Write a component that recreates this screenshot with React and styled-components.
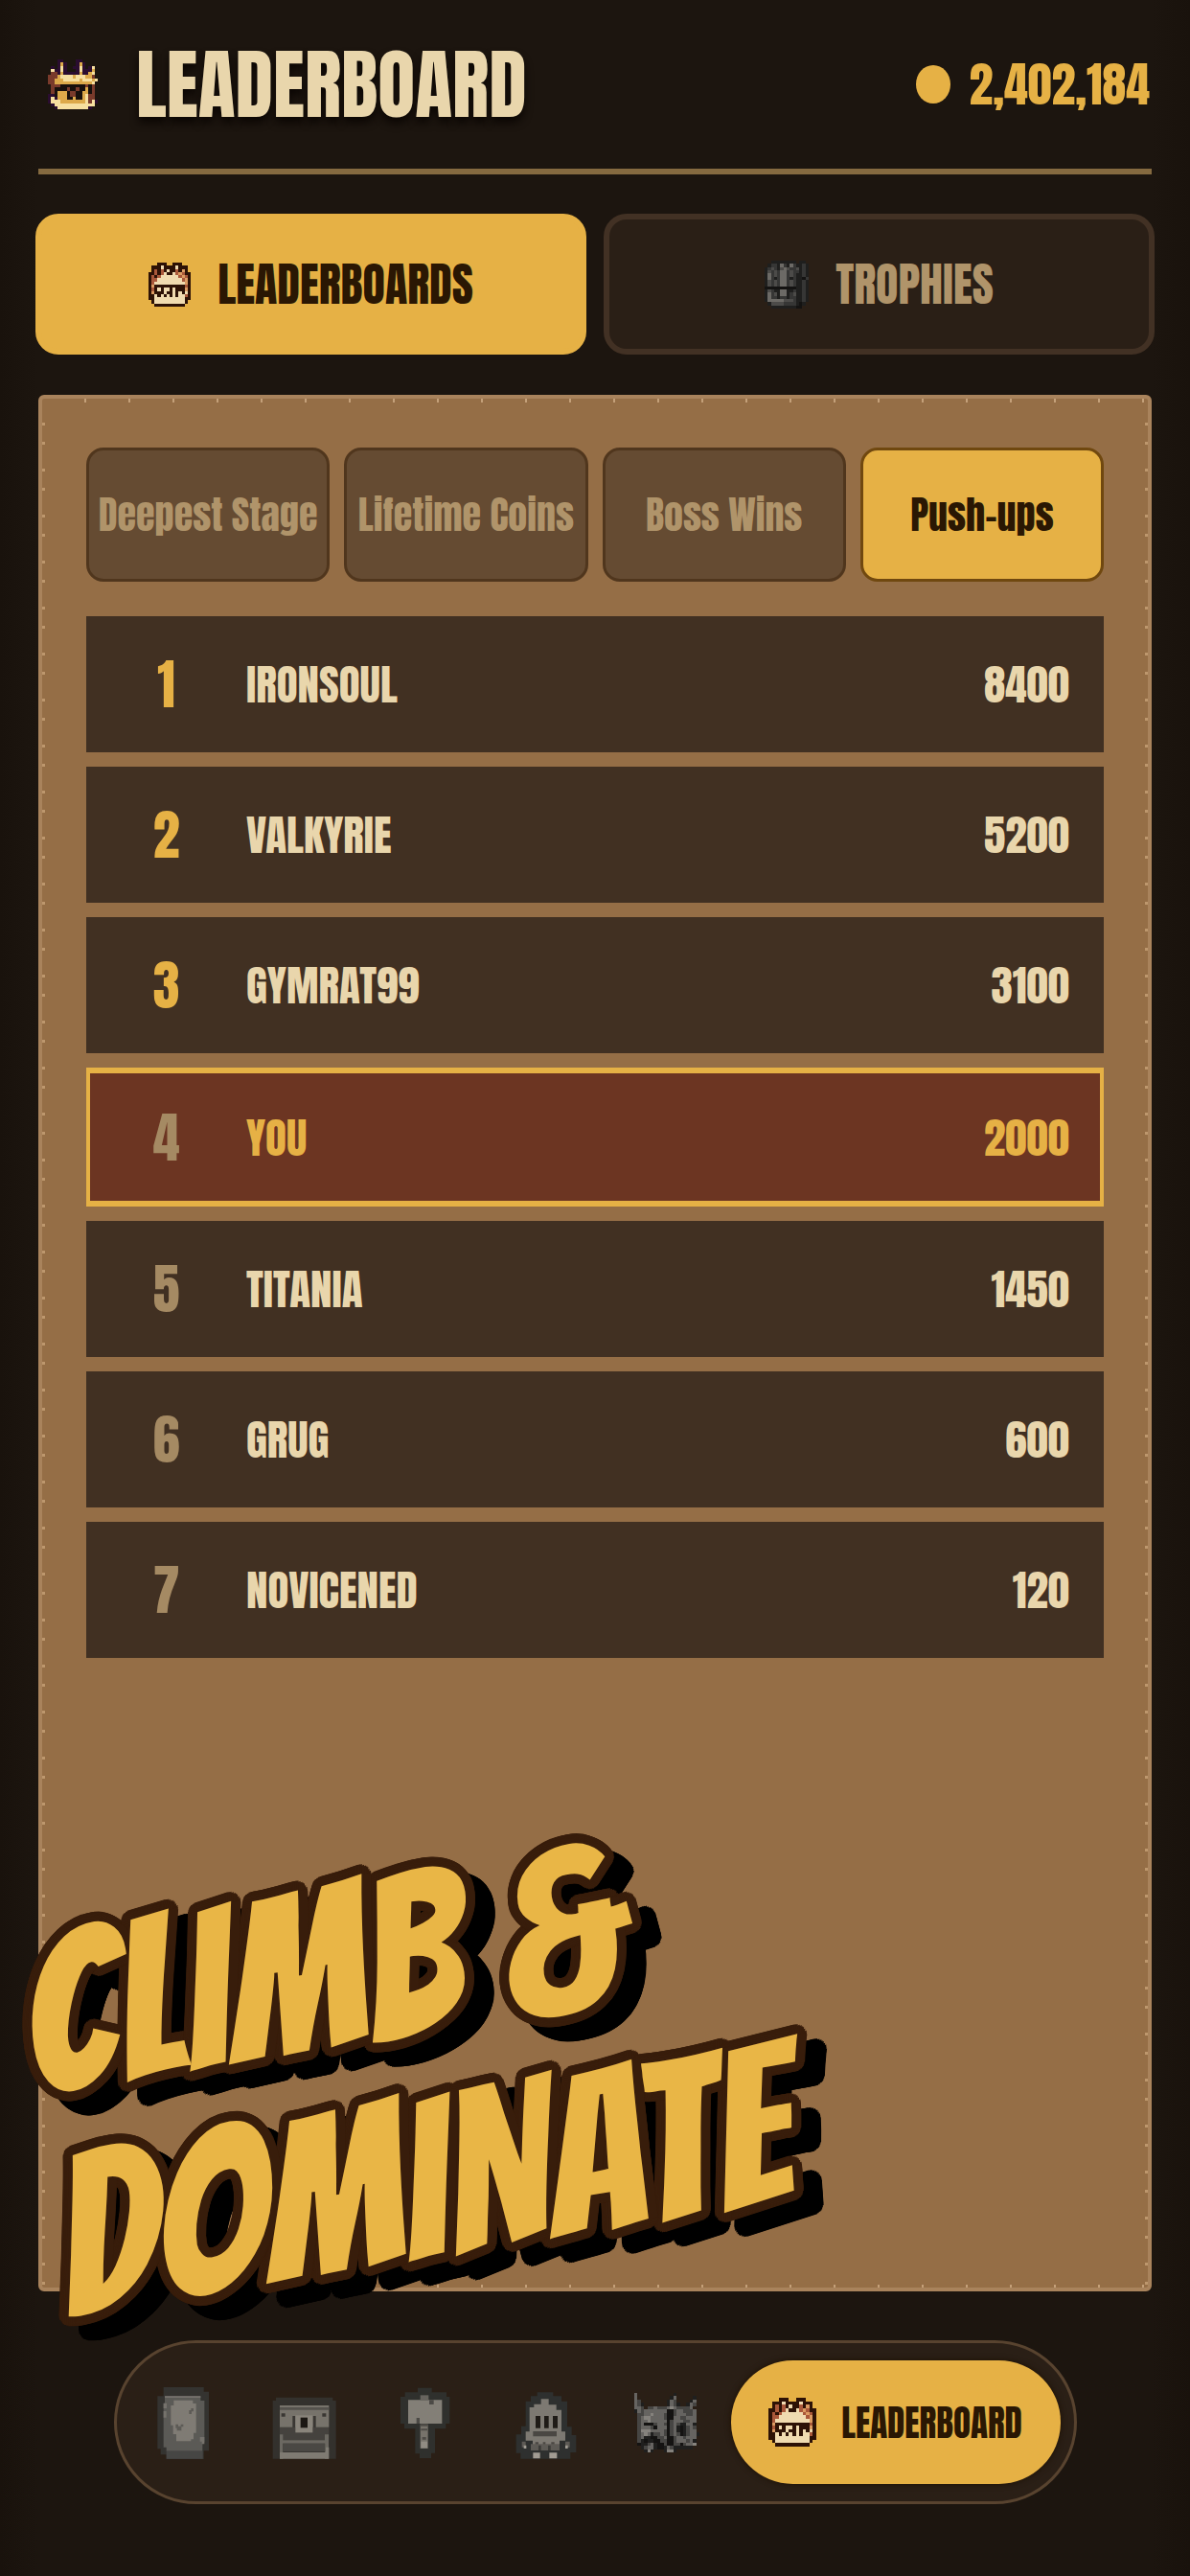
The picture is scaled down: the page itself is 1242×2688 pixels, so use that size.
import React, { useState } from 'react'
import styled, { createGlobalStyle } from 'styled-components'

const colors = {
  page: '#1c150f',
  surface: '#2a1f16',
  surfaceBorder: '#423124',
  gold: '#e6b145',
  cream: '#e9d6ac',
  tan: '#b0946a',
  leather: '#956e46',
  leatherDark: '#654b32',
  row: '#413022',
  you: '#6c3522',
  ink: '#2a1703'
}

const display = "'Anton', 'Impact', 'Liberation Sans Narrow', 'Liberation Sans', sans-serif"
const comic = "'Bangers', 'Liberation Sans Narrow', 'Liberation Sans', sans-serif"

// Ring of hard shadows, gives an outline with round corners
const ring = (radius, color, offset = 0) => Array.from({ length: 32 }, (_, i) => {
  const angle = i / 32 * Math.PI * 2
  const x = Math.round(Math.cos(angle) * radius) + offset
  const y = Math.round(Math.sin(angle) * radius) + offset
  return `${x}px ${y}px 0 ${color}`
}).join(', ')

const GlobalStyle = createGlobalStyle`
  body {
    margin: 0;
    background: ${colors.page};
    font-family: ${display};
    font-weight: 400;
  }

  *, *::before, *::after {
    box-sizing: border-box;
  }

  button {
    font: inherit;
    cursor: pointer;
  }
`

const Page = styled.div`
  display: flex;
  flex-direction: column;
  min-height: 100vh;
  padding: 0 40px 75px;
  background: linear-gradient(to right, #19120c 0, ${colors.page} 40px, ${colors.page} calc(100% - 40px), #19120c 100%);
`

const Header = styled.header`
  display: flex;
  align-items: center;
  height: 182px;
  padding: 0 2px 0 10px;
  border-bottom: 6px solid #856a40;
`

const Title = styled.h1`
  flex: 1;
  margin: 0 0 0 40px;
  font-size: 80px;
  font-weight: 400;
  line-height: 96px;
  color: ${colors.cream};
  text-shadow: 0 6px 8px #0c0704;
`

const Coins = styled.div`
  display: flex;
  align-items: center;
  gap: 20px;
  font-size: 50px;
  line-height: 64px;
  color: ${colors.gold};
`

const Coin = styled.span`
  width: 36px;
  height: 40px;
  border-radius: 50%;
  background: ${colors.gold};
`

const Tabs = styled.div`
  display: grid;
  grid-template-columns: 1fr 1fr;
  gap: 18px;
  margin: 41px -3px 42px;
`

const Tab = styled.button`
  display: flex;
  align-items: center;
  justify-content: center;
  gap: 28px;
  height: 147px;
  font-size: 48px;
  border-radius: 24px;
  border: 6px solid ${props => props.$active ? colors.gold : colors.surfaceBorder};
  background: ${props => props.$active ? colors.gold : colors.surface};
  color: ${props => props.$active ? colors.ink : colors.tan};
`

const Panel = styled.main`
  position: relative;
  flex: 1;
  padding: 51px 46px;
  border: 4px solid #a9835c;
  border-radius: 6px;
  background:
    repeating-linear-gradient(90deg, transparent 0 44px, #c4a079 44px 46px) top / 100% 4px no-repeat,
    repeating-linear-gradient(90deg, transparent 0 44px, #c4a079 44px 46px) bottom / 100% 3px no-repeat,
    repeating-linear-gradient(transparent 0 25px, #bd976d 25px 28px, transparent 28px 45px, #bd976d 45px 48px) left / 3px 100% no-repeat,
    repeating-linear-gradient(transparent 0 25px, #bd976d 25px 28px, transparent 28px 45px, #bd976d 45px 48px) right / 3px 100% no-repeat,
    ${colors.leather};
`

const Metrics = styled.div`
  display: grid;
  grid-template-columns: repeat(4, 1fr);
  gap: 15px;
`

const Metric = styled.button`
  height: 140px;
  padding: 0;
  font-size: 40px;
  white-space: nowrap;
  border-radius: 18px;
  border: 3px solid ${props => props.$active ? '#70480f' : '#50361d'};
  background: ${props => props.$active ? colors.gold : colors.leatherDark};
  color: ${props => props.$active ? colors.ink : colors.tan};
`

const Board = styled.table`
  width: 100%;
  margin-top: 21px;
  border-collapse: separate;
  border-spacing: 0 15px;
`

const Row = styled.tr`
  height: ${props => props.$you ? 145 : 142}px;
  background: ${props => props.$you ? colors.you : colors.row};
  color: ${props => props.$you ? colors.gold : colors.cream};
  box-shadow: ${props => props.$you
    ? `inset 4px 6px ${colors.gold}, inset -4px -6px ${colors.gold}`
    : 'none'};
`

const Rank = styled.td`
  width: 167px;
  padding: 0;
  font-size: 56px;
  text-align: center;
  color: ${props => props.$top ? colors.gold : '#a58a63'};
`

const Name = styled.th`
  padding: 0;
  font-size: 45px;
  font-weight: 400;
  text-align: left;
`

const Score = styled.td`
  padding: 0 36px 0 0;
  font-size: 45px;
  text-align: right;
`

const Slogan = styled.p`
  position: absolute;
  left: 32px;
  bottom: -64px;
  margin: 0;
  font-family: ${comic};
  font-size: 234px;
  line-height: 232px;
  white-space: nowrap;
  color: #e9b646;
  text-shadow: ${ring(10, '#381d0b')}, ${ring(10, '#000', 18)};
  transform: rotate(-9deg);
  transform-origin: left bottom;
  pointer-events: none;
`

const Nav = styled.nav`
  display: flex;
  align-items: center;
  align-self: center;
  height: 171px;
  margin-top: 51px;
  padding: 0 14px 0 7px;
  border: 3px solid #58432f;
  border-radius: 86px;
  background: ${colors.surface};
`

const NavButton = styled.button`
  display: flex;
  align-items: center;
  justify-content: center;
  width: 126px;
  height: 129px;
  padding: 0;
  border: 0;
  background: none;
`

const NavPill = styled(NavButton)`
  gap: 26px;
  width: 344px;
  margin-left: 4px;
  font-size: 37px;
  border-radius: 65px;
  background: ${colors.gold};
  color: ${colors.ink};
  box-shadow: 0 0 6px #1d1003;
`

// One character per pixel, dots are transparent
const chest = [
  '...ooo..ooo...',
  '.ooocoooocooo.',
  '.ororocooroto.',
  'oororcoocrtroo',
  'ororccccccrtro',
  'orrccccccccrto',
  'orccccccccccto',
  'otooooooooooro',
  'orococcocoooto',
  'otooocoocococo',
  'oocococococcro',
  'ooccccccccccoo',
  '.occcccccccco.',
  '..oooooooooo..'
]

const crown = [
  '...pp....pp.....',
  '...pgp...pgp....',
  '.p.plp..pplp.pl.',
  '.lpplp...plpppg.',
  '.mmpgpppppgppgl.',
  'mmmgllllglllggm.',
  'mmggglllllglllgl',
  'mmggggggggggggl.',
  '.mmmkkkkkkkkmkm.',
  '.mkkkkmkkmkkgkm.',
  '.mkgggkmmkkggkm.',
  'ppkgggkmmkkglmm.',
  'plpgggkkgkkglmm.',
  'plllgggggggglmlp',
  '.plllllllllllll.',
  '..pllllllllllp..'
]

const trophy = [
  '..dddddddd.dd.',
  '.daadhadhaddad',
  'dabadbhbaabdad',
  'dbabahhabaadad',
  'dhabahhabaddad',
  'dhadahhadaddka',
  'dbabahhabaddad',
  'dbabahhabaddad',
  'kkkkkkkkkkddad',
  'dbaddhhddaddad',
  'dhabdhhdabddad',
  'dhaadaadaaddad',
  'dhhhhhbbbaddad',
  '.dbbbbaaaadkd.',
  '..ddddddddkk..'
]

const beasts = [
  'b...........d.......',
  'b..........db.....d.',
  'ba........dba....db.',
  'bad.......dbad..dba.',
  'bba.aabaaabhbaaaab..',
  'dbabbbbbbbkkabbaaab.',
  '.aabbhbbbakkabbbaab.',
  '.abhhbbbbakkbbaabbb.',
  '.abbhbbbbbkabbbaabb.',
  '.abkkkabbakabaddbbd.',
  '.abbbakbbbkabdkdaba.',
  '.ahhhbbbbakabdkdabb.',
  '.abhbdaabakabakdabbd',
  '.abddkkaabkkabbabbb.',
  '.adkddkkaakkabbbabd.',
  '.kddabdkkakkaakabbh.',
  '..dabbdkkdbadddddd..',
  '...dhd...dhhd.......'
]

const warm = {
  o: '#2d1206', r: '#a9583a', t: '#dc9b62', c: '#f0dbb0',
  p: '#2a0d30', m: '#793a2b', g: '#dca94a', l: '#f6dfa0', k: '#17100d'
}
const grey = { d: '#1f1f1e', k: '#141312', a: '#464543', b: '#666461', h: '#85827d' }
const faded = { d: '#1f1f1e', k: '#141312', a: '#363635', b: '#4c4b49', h: '#6c6a66' }

const Sprite = ({map, palette, width, height}) => (
  <svg
    width={width}
    height={height}
    viewBox={`0 0 ${map[0].length} ${map.length}`}
    preserveAspectRatio="none"
    shapeRendering="crispEdges"
    aria-hidden="true">
    {map.map((line, y) => line.split('').map((key, x) => (
      palette[key] && <rect key={`${x}-${y}`} x={x} y={y} width="1" height="1" fill={palette[key]}/>
    )))}
  </svg>
)

const NavIcon = ({children, left}) => (
  <svg width="75" height="80" viewBox={`${left} 171 225 240`} aria-hidden="true">
    {children}
  </svg>
)

const TabletIcon = () => (
  <NavIcon left={134}>
    <path fill="#343330" d="M184 180h126v14h16v185h-16v26H193v-14h-18v-18h-10V208h19z"/>
    <path fill="#5b5a56" d="M188 208h112v14h12v130h-6v28H193v-12h-9V230h4z"/>
    <path fill="#75726c" d="M188 208h112v5H188zM184 230h10v16h-10zM184 255h9v20h-9zM298 336h14v22h-8v-8h-6z"/>
    <path fill="#7f7b74" d="M216 221h60v10h10v92h-8v20h-8v6h-46v-22h-10v-28h-7v-62h9z"/>
    <path fill="#5d5b56" d="M264 252h6v-6h8v10h-6v8h-8zM222 296h8v6h8v-6h8v8h-6v12h-14v-8h-4z"/>
    <path fill="#464644" d="M193 380h114v24H193z"/>
  </NavIcon>
)

const ChestIcon = () => (
  <NavIcon left={512}>
    <path fill="#33312d" d="M536 212h178v10h10v182H526V222h10z"/>
    <path fill="#77736b" d="M548 237h154v68H548z"/>
    <path fill="#55524d" d="M548 243h154v8H548z"/>
    <path fill="#3a3733" d="M553 262h12v10h-12zM681 262h12v10h-12zM588 270h9v36h-9zM652 270h9v36h-9z"/>
    <path fill="#45423e" d="M548 306h154v40H548z"/>
    <path fill="#89847b" d="M597 268h54v54h-54z"/>
    <path fill="#1b1713" d="M613 275h22v32h-22z"/>
    <path fill="#6b6861" d="M548 328h10v76h-10zM689 328h12v76h-12zM558 346h132v10H558z"/>
    <path fill="#4a4844" d="M558 356h132v26H558z"/>
    <path fill="#7f7b73" d="M548 384h154v20H548zM692 368h10v20h-10z"/>
  </NavIcon>
)

const HammerIcon = () => (
  <NavIcon left={890}>
    <path fill="#2f302d" d="M980 182h44v14h46v14h10v84h-12v16h-34v76h-12v16h-36v-14h-14v-78h-34v-16h-12v-84h14v-14h40z"/>
    <path fill="#837f77" d="M950 220h106v74H950z"/>
    <path fill="#67645e" d="M988 205h26v16h-26z"/>
    <path fill="#4c4a46" d="M1016 220h14v14h-14zM976 276h10v18h-10z"/>
    <path fill="#77736b" d="M988 296h24v76h-24z"/>
    <path fill="#4f4c47" d="M990 310h20v6h-20zM994 336h12v8h-12zM988 296h24v6h-24z"/>
    <path fill="#908c83" d="M990 350h20v20h-20z"/>
  </NavIcon>
)

const KnightIcon = () => (
  <NavIcon left={1268}>
    <path fill="#2e302f" d="M1354 196h50v12h26v16h18v80h14v26h14v54h-18v20h-156v-18h-14v-58h16v-26h14v-78h16v-16h20z"/>
    <path fill="#7d7972" d="M1366 217h24v18h24v16h16v68h12v28h-18v14h-84v-14h-22v-28h12v-76h14v-10h22z"/>
    <path fill="#1f1b17" d="M1349 270h15v38h-15zM1376 270h14v38h-14zM1403 270h15v38h-15z"/>
    <path fill="#4a4743" d="M1341 318h74v16h-74zM1348 352h10v10h-10zM1372 352h8v14h-8zM1398 352h10v10h-10z"/>
    <path fill="#5d5a55" d="M1334 358h90v20h-90zM1306 350h12v18h-12zM1442 350h14v18h-14z"/>
    <path fill="#3b3a37" d="M1358 362h8v16h-8zM1388 362h8v16h-8z"/>
    <path fill="#a19c93" d="M1341 385h22v18h-22zM1392 385h24v18h-24zM1312 362h8v10h-8zM1442 362h8v10h-8z"/>
  </NavIcon>
)

const tabs = [
  { label: 'LEADERBOARDS', icon: <Sprite map={chest} palette={warm} width={44} height={46}/> },
  { label: 'TROPHIES', icon: <Sprite map={trophy} palette={faded} width={46} height={50}/> }
]

const metrics = ['Deepest Stage', 'Lifetime Coins', 'Boss Wins', 'Push-ups']

const players = [
  { name: 'IRONSOUL', score: 8400 },
  { name: 'VALKYRIE', score: 5200 },
  { name: 'GYMRAT99', score: 3100 },
  { name: 'YOU', score: 2000, you: true },
  { name: 'TITANIA', score: 1450 },
  { name: 'GRUG', score: 600 },
  { name: 'NOVICENED', score: 120 }
]

const sections = [
  { label: 'Tablet', icon: <TabletIcon/> },
  { label: 'Chest', icon: <ChestIcon/> },
  { label: 'Forge', icon: <HammerIcon/> },
  { label: 'Hero', icon: <KnightIcon/> },
  { label: 'Beasts', icon: <Sprite map={beasts} palette={grey} width={68} height={62}/> }
]

export default () => {
  const [tab, setTab] = useState('LEADERBOARDS')
  const [metric, setMetric] = useState('Push-ups')

  return (
    <Page>
      <GlobalStyle/>
      <Header>
        <Sprite map={crown} palette={warm} width={52} height={52}/>
        <Title>LEADERBOARD</Title>
        <Coins>
          <Coin/>
          <span>2,402,184</span>
        </Coins>
      </Header>

      <Tabs>
        {tabs.map(({label, icon}) => (
          <Tab key={label} $active={tab === label} aria-pressed={tab === label} onClick={() => setTab(label)}>
            {icon}
            {label}
          </Tab>
        ))}
      </Tabs>

      <Panel>
        <Metrics>
          {metrics.map(label => (
            <Metric
              key={label}
              $active={metric === label}
              aria-pressed={metric === label}
              onClick={() => setMetric(label)}>
              {label}
            </Metric>
          ))}
        </Metrics>
        <Board aria-label={metric}>
          <tbody>
            {players.map(({name, score, you}, index) => (
              <Row key={name} $you={you}>
                <Rank $top={index < 3}>{index + 1}</Rank>
                <Name scope="row">{name}</Name>
                <Score>{score}</Score>
              </Row>
            ))}
          </tbody>
        </Board>
        <Slogan>
          CLIMB &amp;<br/>DOMINATE
        </Slogan>
      </Panel>

      <Nav>
        {sections.map(({label, icon}) => (
          <NavButton key={label} aria-label={label}>{icon}</NavButton>
        ))}
        <NavPill aria-current="page">
          <Sprite map={chest} palette={warm} width={50} height={51}/>
          LEADERBOARD
        </NavPill>
      </Nav>
    </Page>
  )
}
